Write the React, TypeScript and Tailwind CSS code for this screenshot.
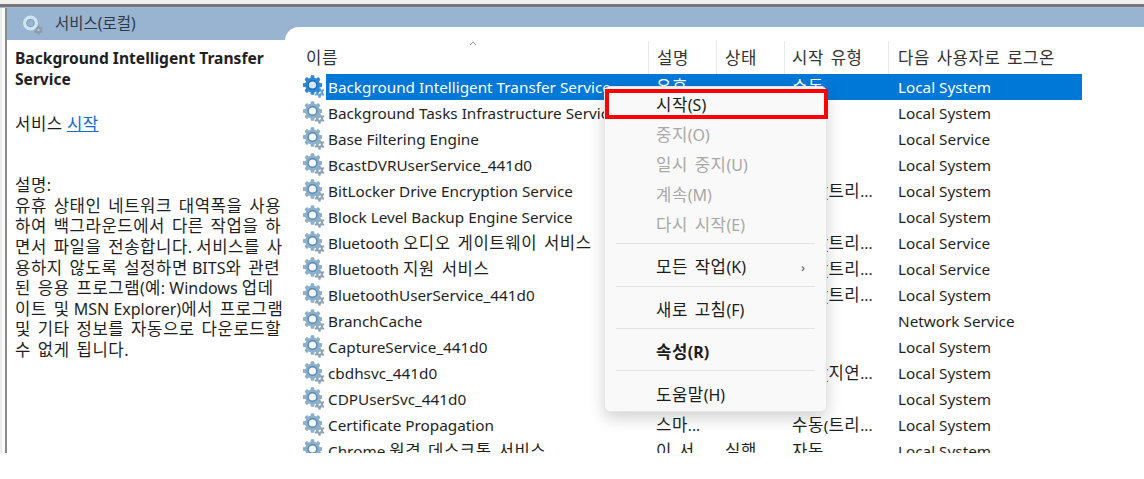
import React from 'react'

const FONT = "font-['Noto_Sans','Noto_Sans_CJK_KR',sans-serif]"

const services = [
  { name: 'Background Intelligent Transfer Service', desc: '유휴', status: '', start: '수동', logon: 'Local System' },
  { name: 'Background Tasks Infrastructure Service', desc: '', status: '', start: '', logon: 'Local System' },
  { name: 'Base Filtering Engine', desc: '', status: '', start: '', logon: 'Local Service' },
  { name: 'BcastDVRUserService_441d0', desc: '', status: '', start: '', logon: 'Local System' },
  { name: 'BitLocker Drive Encryption Service', desc: '', status: '', start: '수동(트리...', logon: 'Local System' },
  { name: 'Block Level Backup Engine Service', desc: '', status: '', start: '', logon: 'Local System' },
  { name: 'Bluetooth 오디오 게이트웨이 서비스', desc: '', status: '', start: '수동(트리...', logon: 'Local Service' },
  { name: 'Bluetooth 지원 서비스', desc: '', status: '', start: '수동(트리...', logon: 'Local Service' },
  { name: 'BluetoothUserService_441d0', desc: '', status: '', start: '수동(트리...', logon: 'Local System' },
  { name: 'BranchCache', desc: '', status: '', start: '', logon: 'Network Service' },
  { name: 'CaptureService_441d0', desc: '', status: '', start: '', logon: 'Local System' },
  { name: 'cbdhsvc_441d0', desc: '', status: '', start: '자동(지연...', logon: 'Local System' },
  { name: 'CDPUserSvc_441d0', desc: '', status: '', start: '', logon: 'Local System' },
  { name: 'Certificate Propagation', desc: '스마...', status: '', start: '수동(트리...', logon: 'Local System' },
  { name: 'Chrome 원격 데스크톱 서비스', desc: '이 서...', status: '실행', start: '자동', logon: 'Local System' },
]

const columns = [
  { label: '설명', width: 'w-[68px]', pad: 'pl-2' },
  { label: '상태', width: 'w-[68px]', pad: 'pl-[8px]' },
  { label: '시작 유형', width: 'w-[104px]', pad: 'pl-[7px]' },
  { label: '다음 사용자로 로그온', width: 'w-[194px]', pad: 'pl-[9px]' },
]

const description = [
  '유휴 상태인 네트워크 대역폭을 사용',
  '하여 백그라운드에서 다른 작업을 하',
  '면서 파일을 전송합니다. 서비스를 사',
  '용하지 않도록 설정하면 BITS와 관련',
  '된 응용 프로그램(예: Windows 업데',
  '이트 및 MSN Explorer)에서 프로그램',
  '및 기타 정보를 자동으로 다운로드할',
  '수 없게 됩니다.',
]

// 한글은 라틴 글자보다 조금 크게
function Ko({ text }: { text: string }) {
  const parts = text.split(/([가-힣]+(?: [가-힣]+)*)/)
  return (
    <>
      {parts.map((p, i) =>
        /[가-힣]/.test(p) ? (
          <span key={i} className="text-[16.7px] tracking-[0.55px] [word-spacing:2px]">{p}</span>
        ) : (
          <span key={i}>{p}</span>
        )
      )}
    </>
  )
}

// 톱니바퀴 아이콘
function Gear({ dark = false }: { dark?: boolean }) {
  const teeth = [0, 45, 90, 135, 180, 225, 270, 315]
  const small = [0, 60, 120, 180, 240, 300]
  const main = dark ? '#2f86d6' : '#8bb0cc'
  return (
    <svg width="24" height="24" viewBox="0 0 24 24" className="shrink-0">
      <g transform="translate(17.5 17.5)">
        {small.map(a => (
          <rect key={a} x="-1" y="-5" width="2" height="10" fill={dark ? '#5da3df' : '#8fa3b5'} transform={`rotate(${a})`} />
        ))}
        <circle r="3.4" fill={dark ? '#5da3df' : '#8fa3b5'} />
        <circle r="1.3" fill="#fff" />
      </g>
      <g transform="translate(10.5 10)">
        {teeth.map(a => (
          <rect key={a} x="-1.7" y="-9.5" width="3.4" height="19" rx="0.6" fill={main} transform={`rotate(${a})`} />
        ))}
        <circle r="7.4" fill={main} />
        <circle r="5" fill={dark ? '#1a6cbb' : '#5f88aa'} />
        <circle r="3.6" fill={dark ? '#d3e8fa' : '#f2f7fb'} />
      </g>
    </svg>
  )
}

// 제목 띠의 연한 아이콘
function HeaderGear() {
  return (
    <svg width="24" height="24" viewBox="0 0 24 24" className="shrink-0">
      <g fill="#8e9bab" transform="translate(17.5 18)">
        {[0, 60, 120].map(a => (
          <rect key={a} x="-1" y="-4.6" width="2" height="9.2" transform={`rotate(${a})`} />
        ))}
        <circle r="3.2" />
        <circle r="1.2" fill="#b4c6da" />
      </g>
      <circle cx="9.5" cy="11" r="5.8" fill="none" stroke="#cfe6f2" strokeWidth="3.4" />
      <circle cx="9.5" cy="11" r="3.8" fill="none" stroke="#7d98b4" strokeWidth="0.8" />
    </svg>
  )
}

function MenuItem({ label, top, disabled, bold, arrow }: { label: string; top: string; disabled?: boolean; bold?: boolean; arrow?: boolean }) {
  return (
    <div className={`flex items-center justify-between pl-[51px] pr-[21px] text-[16px] leading-[24px] h-[24px] whitespace-nowrap ${top} ${disabled ? 'text-[#a8a8a8]' : 'text-[#1c1c1c]'} ${bold ? 'font-bold' : ''}`}>
      <span><Ko text={label} /></span>
      {arrow && <span className="text-[13px] text-[#555]">›</span>}
    </div>
  )
}

function Separator({ top }: { top: string }) {
  return <div className={`mx-[11px] h-px bg-[#e4e4e4] ${top}`} />
}

export default function App() {
  return (
    <div className={`w-[1144px] h-[479px] bg-white overflow-hidden relative text-[15.3px] text-[#1f1f1f] ${FONT}`}>
      <div className="h-[453px] flex flex-col overflow-hidden">
        <div className="h-1 bg-[#f0f0f0] shrink-0" />
        <div className="h-[3px] bg-[#777] shrink-0" />
        <div className="h-px bg-[#a8bbd2] shrink-0" />
        <div className="flex flex-1 min-h-0">
          <div className="w-[2px] bg-[#ececec] shrink-0" />
          <div className="w-[3px] bg-[#fbfbfb] shrink-0" />
          <div className="w-[2px] bg-[#8a8a8a] shrink-0" />
          <div className="flex flex-1 bg-[#99b4d1] min-w-0">
            {/* 왼쪽 설명 패널 */}
            <div className="w-[278px] shrink-0 flex flex-col">
              <div className="h-[32px] flex items-center pl-[14px] gap-[10px] text-[#2c3a48] shrink-0">
                <HeaderGear />
                <span className="text-[15.5px]">서비스(로컬)</span>
              </div>
              <div className="flex-1 bg-white pl-2 pr-1 pt-[8px] text-[16px] leading-[20.6px] whitespace-nowrap">
                <div className="font-bold text-[15.6px] leading-[20.8px]">
                  <div>Background Intelligent Transfer</div>
                  <div>Service</div>
                </div>
                <div className="mt-[24px]">
                  <Ko text="서비스 " />
                  <span className="text-[#0f6cd6] underline"><Ko text="시작" /></span>
                </div>
                <div className="mt-[41px]"><Ko text="설명" />:</div>
                {description.map(line => (
                  <div key={line}><Ko text={line} /></div>
                ))}
              </div>
            </div>
            {/* 서비스 목록 */}
            <div className="flex-1 mt-[19px] bg-white rounded-tl-[14px] min-w-0 pl-[15px]">
              <div className="flex h-[47px] pt-[14px] w-[782px]">
                <div className="w-[348px] pl-[6px] relative flex items-center text-[#333]">
                  <Ko text="이름" />
                  <svg width="8" height="5" viewBox="0 0 8 5" className="absolute left-[169px] top-[0px]">
                    <path d="M1 4 L4 1 L7 4" fill="none" stroke="#a0a0a0" strokeWidth="1" />
                  </svg>
                </div>
                {columns.map(c => (
                  <div key={c.label} className={`${c.width} ${c.pad} border-l border-[#e8e8e8] flex items-center text-[#333] whitespace-nowrap`}>
                    <Ko text={c.label} />
                  </div>
                ))}
              </div>
              {services.map((s, i) => (
                <div key={s.name} className={`flex h-[26px] items-center w-[782px] whitespace-nowrap ${i === 0 ? 'text-white' : ''}`}>
                  <div className="w-[348px] flex items-center overflow-hidden">
                    <div className="w-[26px] flex shrink-0 pl-[2px]"><Gear dark={i === 0} /></div>
                    <span className={`h-[26px] flex-1 pl-[2px] leading-[26px] ${i === 0 ? 'bg-[#0078d7]' : ''}`}><Ko text={s.name} /></span>
                  </div>
                  <div className={`w-[68px] h-[26px] leading-[26px] pl-2 ${i === 0 ? 'bg-[#0078d7]' : ''}`}><Ko text={s.desc} /></div>
                  <div className={`w-[68px] h-[26px] leading-[26px] pl-[9px] ${i === 0 ? 'bg-[#0078d7]' : ''}`}><Ko text={s.status} /></div>
                  <div className={`w-[104px] h-[26px] leading-[26px] pl-[8px] ${i === 0 ? 'bg-[#0078d7]' : ''}`}><Ko text={s.start} /></div>
                  <div className={`w-[194px] h-[26px] leading-[26px] pl-[10px] ${i === 0 ? 'bg-[#0078d7]' : ''}`}>{s.logon}</div>
                </div>
              ))}
            </div>
          </div>
        </div>
      </div>

      {/* 컨텍스트 메뉴 */}
      <div className="absolute left-[604px] top-[86px] w-[223px] h-[326px] bg-[#f9f9f9] rounded-[6px] border border-[#e6e6e6] shadow-[0_6px_16px_rgba(0,0,0,0.18)] pt-[6px]">
        <MenuItem label="시작(S)" top="mt-0" />
        <MenuItem label="중지(O)" top="mt-[6px]" disabled />
        <MenuItem label="일시 중지(U)" top="mt-[6px]" disabled />
        <MenuItem label="계속(M)" top="mt-[6px]" disabled />
        <MenuItem label="다시 시작(E)" top="mt-[6px]" disabled />
        <Separator top="mt-[6px]" />
        <MenuItem label="모든 작업(K)" top="mt-[11px]" arrow />
        <Separator top="mt-[7px]" />
        <MenuItem label="새로 고침(F)" top="mt-[11px]" />
        <Separator top="mt-[6px]" />
        <MenuItem label="속성(R)" top="mt-[11px]" bold />
        <Separator top="mt-[6px]" />
        <MenuItem label="도움말(H)" top="mt-[12px]" />
        {/* 강조 표시 */}
        <div className="absolute left-0 top-[2px] w-[223px] h-[30px] border-[4px] border-[#ff0000]" />
      </div>
    </div>
  )
}
